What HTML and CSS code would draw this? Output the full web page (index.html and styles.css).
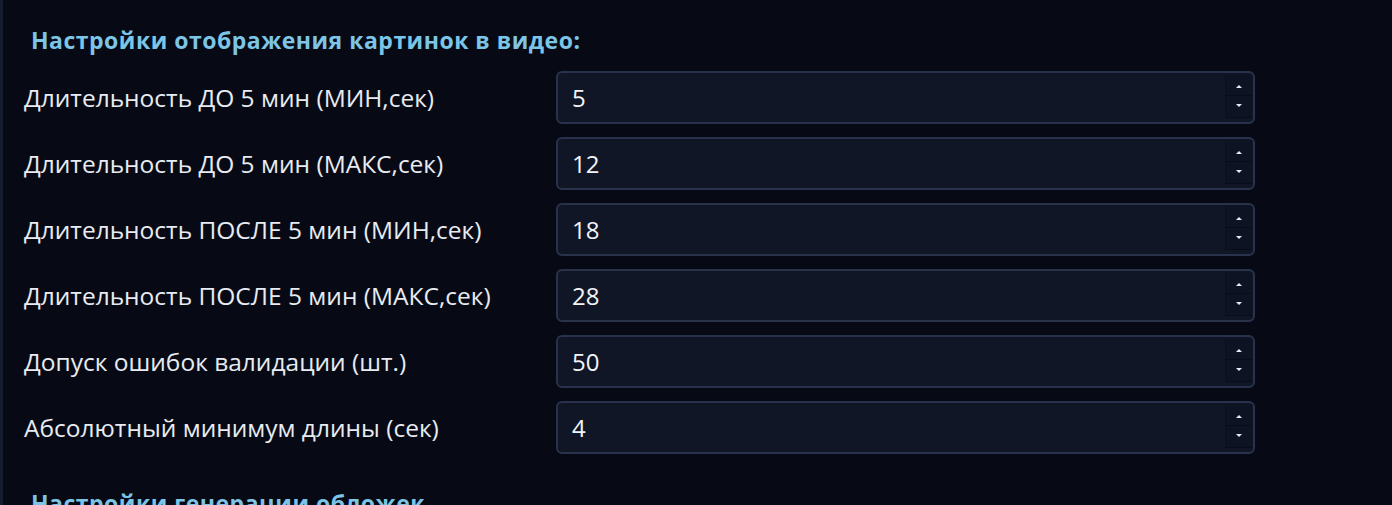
FILE: index.html
```html
<!DOCTYPE html>
<html lang="ru">
<head>
  <meta charset="UTF-8">
  <title>Настройки</title>
  <link rel="stylesheet" href="styles.css">
</head>
<body>

<div class="panel">
  <h3 class="section-title">Настройки отображения картинок в видео:</h3>

  <div class="settings">
    <label>Длительность ДО 5 мин (МИН,сек)</label>
    <div class="num-box">
      <input type="number" value="5">
      <div class="spin"><span class="up"></span><span class="down"></span></div>
    </div>

    <label>Длительность ДО 5 мин (МАКС,сек)</label>
    <div class="num-box">
      <input type="number" value="12">
      <div class="spin"><span class="up"></span><span class="down"></span></div>
    </div>

    <label>Длительность ПОСЛЕ 5 мин (МИН,сек)</label>
    <div class="num-box">
      <input type="number" value="18">
      <div class="spin"><span class="up"></span><span class="down"></span></div>
    </div>

    <label>Длительность ПОСЛЕ 5 мин (МАКС,сек)</label>
    <div class="num-box">
      <input type="number" value="28">
      <div class="spin"><span class="up"></span><span class="down"></span></div>
    </div>

    <label>Допуск ошибок валидации (шт.)</label>
    <div class="num-box">
      <input type="number" value="50">
      <div class="spin"><span class="up"></span><span class="down"></span></div>
    </div>

    <label>Абсолютный минимум длины (сек)</label>
    <div class="num-box">
      <input type="number" value="4">
      <div class="spin"><span class="up"></span><span class="down"></span></div>
    </div>
  </div>

  <h3 class="section-title next">Настройки генерации обложек</h3>
</div>

</body>
</html>
```

FILE: styles.css
```css
html, body {
  margin: 0;
  height: 100%;
  overflow: hidden;
}

body {
  font-family: "Open Sans", "Noto Sans", sans-serif;
  background: #070a14;
  color: #e8ebf2;
}

.panel {
  border-left: 3px solid #161c2f;
  min-height: 100%;
  padding: 0 0 0 21px;
}

.section-title {
  margin: 0;
  padding: 26px 0 0 7px;
  color: #7cc5e6;
  font-size: 23px;
  font-weight: 700;
  letter-spacing: 0.5px;
  line-height: 28px;
}

.section-title.next {
  padding-top: 35px;
}

.settings {
  display: grid;
  grid-template-columns: 532px 699px;
  row-gap: 13px;
  margin-top: 17px;
}

.settings label {
  display: flex;
  align-items: center;
  font-size: 24.5px;
}

.num-box {
  display: flex;
  height: 49px;
  background: #101626;
  border: 2px solid #28324b;
  border-radius: 6px;
}

.num-box input {
  flex: 1;
  min-width: 0;
  background: transparent;
  border: none;
  outline: none;
  color: #f2f4f8;
  font-family: inherit;
  font-size: 24px;
  padding: 0 0 0 14px;
  -moz-appearance: textfield;
}

.num-box input::-webkit-inner-spin-button,
.num-box input::-webkit-outer-spin-button {
  -webkit-appearance: none;
  margin: 0;
}

.spin {
  display: flex;
  flex-direction: column;
  width: 27px;
  margin: 1px 1px 4px 0;
}

.spin span {
  flex: 1;
  position: relative;
  background: #0d1322;
  border-bottom: 1px solid #080c17;
  border-left: 1px solid #0b1020;
}

.spin span::after {
  content: "";
  position: absolute;
  left: 50%;
  top: 50%;
  margin-left: -3px;
  border-left: 3px solid transparent;
  border-right: 3px solid transparent;
}

.spin .up::after {
  margin-top: 0;
  border-bottom: 3px solid #e8ebf2;
}

.spin .down::after {
  margin-top: -3px;
  border-top: 3px solid #e8ebf2;
}
```
